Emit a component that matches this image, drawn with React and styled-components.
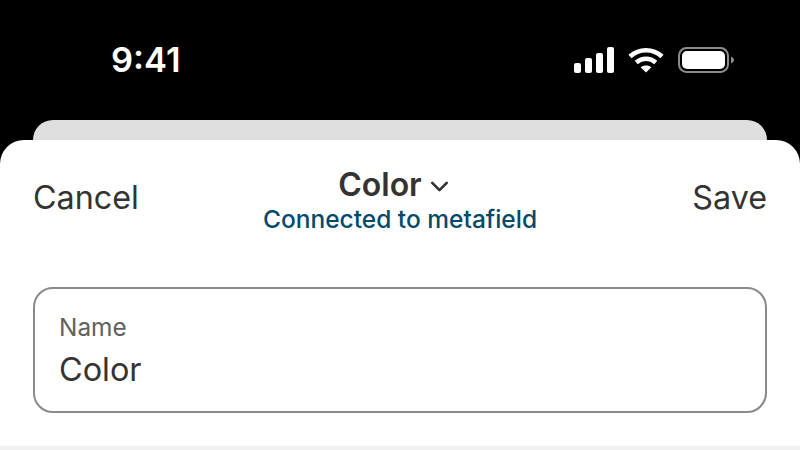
import React from 'react';
import styled, { createGlobalStyle } from 'styled-components';
import { ChevronDown } from 'lucide-react';

const GlobalStyle = createGlobalStyle`
  html, body {
    margin: 0;
    padding: 0;
    background: #000;
  }
  body {
    font-family: Inter, "Liberation Sans", sans-serif;
  }
`

const Screen = styled.div`
  width: 800px;
  height: 450px;
  overflow: hidden;
  display: flex;
  flex-direction: column;
  background: #000;
`
const StatusBar = styled.div`
  height: 120px;
  flex-shrink: 0;
  display: flex;
  align-items: center;
  justify-content: space-between;
  padding: 0 66px 0 111px;
  box-sizing: border-box;
  color: #fff;
`
const Time = styled.div`
  font-size: 34.5px;
  font-weight: 600;
  line-height: 40px;
`
const StatusIcons = styled.div`
  display: flex;
  align-items: center;
  gap: 14px;
`
const BackCard = styled.div`
  height: 20px;
  flex-shrink: 0;
  margin: 0 33px;
  background: #dfdfdf;
  border-radius: 20px 20px 0 0;
`
const Sheet = styled.div`
  flex: 1;
  display: flex;
  flex-direction: column;
  background: #fff;
  border-radius: 24px 24px 0 0;
  padding: 0 33px;
  color: #333;
`
const Header = styled.div`
  display: grid;
  grid-template-columns: 1fr auto 1fr;
  align-items: center;
  height: 116px;
  flex-shrink: 0;
`
const HeaderAction = styled.div`
  font-size: 32.3px;
  line-height: 40px;
  font-weight: 400;
  margin-top: -1px;
  text-align: ${props => props.$end ? 'right' : 'left'};
`
const TitleBlock = styled.div`
  display: flex;
  flex-direction: column;
  align-items: center;
  padding-top: 4px;
`
const TitleRow = styled.div`
  display: flex;
  align-items: center;
  gap: 3px;
  padding-right: 8px;
  font-size: 32px;
  font-weight: 600;
  line-height: 38px;
  svg {
    margin-top: 3px;
  }
`
const Subtitle = styled.div`
  font-size: 24.5px;
  line-height: 30px;
  font-weight: 500;
  color: #024a69;
`
const Field = styled.div`
  margin-top: 31px;
  height: 126px;
  box-sizing: border-box;
  border: 2px solid #8a8a8a;
  border-radius: 20px;
  padding: 24px 24px 0;
`
const FieldLabel = styled.div`
  font-size: 24.4px;
  line-height: 28px;
  color: #616161;
`
const FieldValue = styled.div`
  font-size: 32.4px;
  line-height: 44px;
  margin-top: 7px;
`
const Divider = styled.div`
  flex: 1;
  margin: 33px -33px 0;
  background: #f1f1f1;
`

const SignalIcon = () => (
  <svg width="40" height="26" viewBox="0 0 40 26" fill="#fff">
    <rect x="0" y="16" width="7" height="10" rx="2" />
    <rect x="11" y="11" width="7" height="15" rx="2" />
    <rect x="22" y="6" width="7" height="20" rx="2" />
    <rect x="33" y="0" width="7" height="26" rx="2" />
  </svg>
)

const WifiIcon = () => (
  <svg width="36" height="26" viewBox="0 0 36 26" fill="none" stroke="#fff" strokeWidth="4.6">
    <path d="M2 9.5C11 1.2 25 1.2 34 9.5" />
    <path d="M8.2 15.5C14 10.5 22 10.5 27.8 15.5" />
    <path d="M18 25.5L12.6 20.2C15.7 17.8 20.3 17.8 23.4 20.2Z" fill="#fff" stroke="none" />
  </svg>
)

const BatteryIcon = () => (
  <svg width="56" height="26" viewBox="0 0 56 26">
    <rect x="1" y="1" width="49" height="24" rx="7.5" fill="none" stroke="#8c8c8c" strokeWidth="2" />
    <rect x="4" y="4" width="43" height="18" rx="5" fill="#fff" />
    <path d="M53 9.5C55 10.2 56 11.5 56 13C56 14.5 55 15.8 53 16.5Z" fill="#8c8c8c" />
  </svg>
)

const App = () => {
  return (
    <Screen>
      <GlobalStyle />
      <StatusBar>
        <Time>9:41</Time>
        <StatusIcons>
          <SignalIcon />
          <WifiIcon />
          <BatteryIcon />
        </StatusIcons>
      </StatusBar>
      <BackCard />
      <Sheet>
        <Header>
          <HeaderAction>Cancel</HeaderAction>
          <TitleBlock>
            <TitleRow>
              Color
              <ChevronDown size={29} strokeWidth={2.2} />
            </TitleRow>
            <Subtitle>Connected to metafield</Subtitle>
          </TitleBlock>
          <HeaderAction $end>Save</HeaderAction>
        </Header>
        <Field>
          <FieldLabel>Name</FieldLabel>
          <FieldValue>Color</FieldValue>
        </Field>
        <Divider />
      </Sheet>
    </Screen>
  )
}

export default App
